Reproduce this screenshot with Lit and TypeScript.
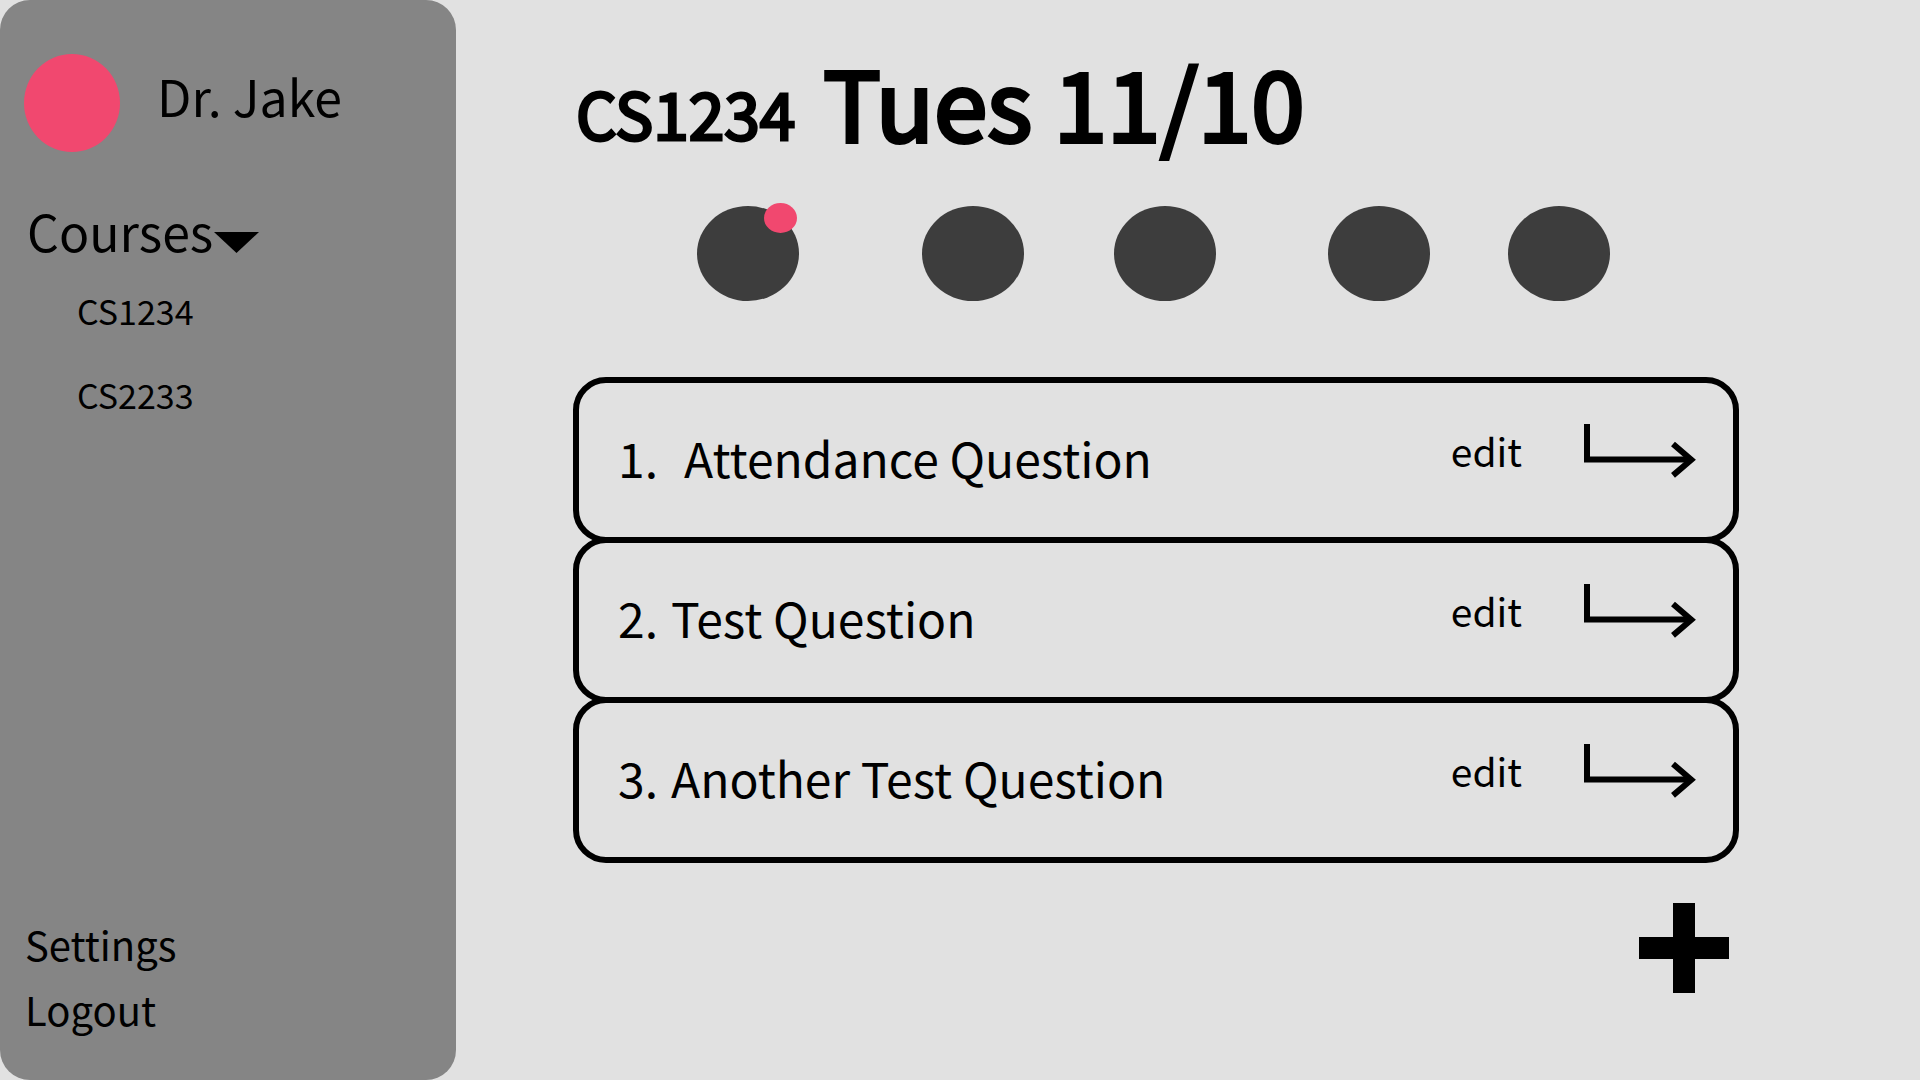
import { LitElement, html, css } from "lit";
import { customElement, property, state } from "lit/decorators.js";
import { classMap } from "lit/directives/class-map.js";

interface Question {
  title: string;
  indented?: boolean;
}

@customElement("course-sidebar")
class CourseSidebar extends LitElement {
  @property({ type: Array }) courses: string[] = [];
  @state() private open = true;

  static styles = css`
    :host {
      display: flex;
      flex-direction: column;
      box-sizing: border-box;
      padding: 54px 24px 38px;
      border-radius: 30px;
      background: #858585;
    }
    .profile {
      display: flex;
      align-items: flex-start;
      gap: 37px;
    }
    .avatar {
      width: 96px;
      height: 98px;
      flex: none;
      border-radius: 50%;
      background: #f1486f;
    }
    .name {
      font-size: 50px;
      line-height: 82px;
    }
    .toggle {
      display: flex;
      align-items: flex-start;
      gap: 1px;
      margin: 42px 0 0;
      padding: 0 0 0 3px;
      border: 0;
      background: none;
      color: inherit;
      font: inherit;
      font-size: 50px;
      line-height: 72px;
      cursor: pointer;
    }
    .caret {
      display: block;
      width: 45px;
      height: 21px;
      margin-top: 38px;
    }
    .courses {
      margin: 3px 0 0;
      padding: 0 0 0 53px;
      list-style: none;
      font-size: 34px;
      line-height: 84px;
    }
    .footer {
      display: flex;
      flex-direction: column;
      align-items: flex-start;
      margin-top: auto;
      padding-left: 1px;
      font-size: 40px;
      line-height: 65px;
    }
    a {
      color: inherit;
      text-decoration: none;
    }
  `;

  render() {
    return html`
      <div class="profile">
        <span class="avatar"></span>
        <span class="name">Dr. Jake</span>
      </div>
      <nav>
        <button class="toggle" aria-expanded=${this.open} @click=${() => (this.open = !this.open)}>
          Courses
          <svg class="caret" viewBox="0 0 45 21" aria-hidden="true"><path d="M0 0H45L22.5 21Z" /></svg>
        </button>
        ${this.open
          ? html`<ul class="courses">
              ${this.courses.map((c) => html`<li><a href="#${c}">${c}</a></li>`)}
            </ul>`
          : null}
      </nav>
      <div class="footer">
        <a href="#settings">Settings</a>
        <a href="#logout">Logout</a>
      </div>
    `;
  }
}

@customElement("question-row")
class QuestionRow extends LitElement {
  @property({ type: Number }) number = 1;
  @property({ attribute: false }) question!: Question;

  static styles = css`
    :host {
      display: flex;
      align-items: flex-start;
      box-sizing: border-box;
      min-height: 166px;
      padding: 32px 37px 32px 39px;
      border: 6px solid #000;
      border-radius: 33px;
    }
    .label {
      display: flex;
      flex: 1;
      gap: 13px;
      font-size: 48px;
      line-height: 84px;
    }
    .indented {
      gap: 26px;
    }
    button {
      margin: 0;
      padding: 0;
      border: 0;
      background: none;
      color: inherit;
      font: inherit;
      cursor: pointer;
    }
    .edit {
      margin-right: 62px;
      font-size: 39px;
      line-height: 70px;
    }
    .go {
      margin-top: 9px;
    }
    .arrow {
      display: block;
      width: 112px;
      height: 56px;
      fill: none;
      stroke: #000;
      stroke-width: 6;
    }
  `;

  render() {
    return html`
      <div class=${classMap({ label: true, indented: !!this.question.indented })}>
        <span>${this.number}.</span>
        <span>${this.question.title}</span>
      </div>
      <button class="edit">edit</button>
      <button class="go" aria-label="Open question">
        <svg class="arrow" viewBox="0 0 112 56" aria-hidden="true">
          <path d="M3 0V35.5H107" />
          <path d="M89 20L107.3 35.7L89 51.4" />
        </svg>
      </button>
    `;
  }
}

@customElement("app-root")
class AppRoot extends LitElement {
  private courses = ["CS1234", "CS2233"];
  private questions: Question[] = [
    { title: "Attendance Question", indented: true },
    { title: "Test Question" },
    { title: "Another Test Question" },
  ];

  static styles = css`
    :host {
      display: flex;
      min-height: 100vh;
      background: #e1e1e1;
      color: #000;
      font-family: "Noto Sans CJK SC", "Noto Sans", sans-serif;
    }
    course-sidebar {
      flex: none;
      width: 23.75%;
    }
    main {
      flex: 1;
      min-width: 0;
      padding: 42px 181px 42px 117px;
    }
    .heading {
      display: flex;
      align-items: flex-end;
      gap: 28px;
      margin: 0;
      font-weight: 400;
    }
    .course {
      padding-left: 3px;
      font-size: 64px;
      line-height: 96px;
      -webkit-text-stroke: 3px #000;
    }
    .day {
      font-size: 96px;
      line-height: 118px;
      -webkit-text-stroke: 4px #000;
    }
    .students {
      display: grid;
      grid-template-columns: 225fr 192fr 214fr 180fr 231fr;
      margin: 46px 0 76px;
      padding-left: 124px;
    }
    .student {
      position: relative;
      width: 102px;
      height: 95px;
      padding: 0;
      border: 0;
      border-radius: 50%;
      background: #3d3d3d;
      cursor: pointer;
    }
    .badge {
      position: absolute;
      top: -3px;
      left: 67px;
      width: 33px;
      height: 30px;
      border-radius: 50%;
      background: #f1486f;
    }
    .questions {
      display: flex;
      flex-direction: column;
    }
    question-row + question-row {
      margin-top: -6px;
    }
    .add {
      display: block;
      margin: 40px 10px 0 auto;
      padding: 0;
      border: 0;
      background: none;
      cursor: pointer;
    }
    .plus {
      display: block;
      width: 90px;
      height: 90px;
    }
  `;

  render() {
    return html`
      <course-sidebar .courses=${this.courses}></course-sidebar>
      <main>
        <h1 class="heading">
          <span class="course">CS1234</span>
          <span class="day">Tues 11/10</span>
        </h1>
        <div class="students">
          ${[1, 2, 3, 4, 5].map(
            (n) => html`<button class="student" aria-label="Student ${n}">
              ${n === 1 ? html`<span class="badge"></span>` : null}
            </button>`
          )}
        </div>
        <div class="questions">
          ${this.questions.map(
            (q, i) => html`<question-row .number=${i + 1} .question=${q}></question-row>`
          )}
        </div>
        <button class="add" aria-label="Add question">
          <svg class="plus" viewBox="0 0 90 90" aria-hidden="true">
            <path d="M34 0H56V34H90V56H56V90H34V56H0V34H34Z" />
          </svg>
        </button>
      </main>
    `;
  }
}
